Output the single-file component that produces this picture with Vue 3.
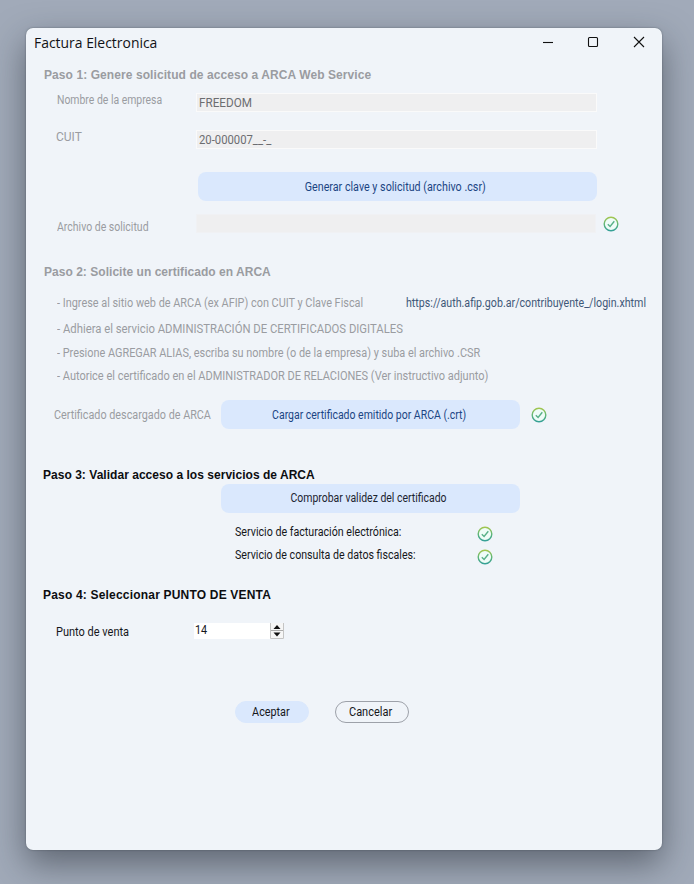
<script setup>
import { h } from 'vue'

const CheckIcon = (props) =>
  h('svg', { class: 'check', viewBox: '0 0 16 16', width: 16, height: 16 }, [
    h('defs', [
      h('linearGradient', { id: props.gid, x1: 0, y1: 0, x2: 0, y2: 1 }, [
        h('stop', { offset: 0, 'stop-color': '#a3c64e' }),
        h('stop', { offset: 0.5, 'stop-color': '#60b678' }),
        h('stop', { offset: 1, 'stop-color': '#35a097' }),
      ]),
    ]),
    h('circle', { cx: 8, cy: 8, r: 6.8, fill: '#effcf8', stroke: `url(#${props.gid})`, 'stroke-width': 1.4 }),
    h('path', { d: 'M4.8 8.2 L7.1 10.5 L11.3 5.3', fill: 'none', stroke: '#58b088', 'stroke-width': 1.4 }),
  ])
CheckIcon.props = ['gid']

const steps = [
  { id: 's2', text: '- Adhiera el servicio ADMINISTRACIÓN DE CERTIFICADOS DIGITALES' },
  { id: 's3', text: '- Presione AGREGAR ALIAS, escriba su nombre (o de la empresa) y suba el archivo .CSR' },
  { id: 's4', text: '- Autorice el certificado en el ADMINISTRADOR DE RELACIONES (Ver instructivo adjunto)' },
]
</script>

<template>
  <main class="desktop">
    <section class="window">
      <header class="titlebar">
        <span class="title t">Factura Electronica</span>
        <svg class="controls" width="104" height="14" viewBox="0 0 104 14" fill="none" stroke="#111" stroke-width="1.1">
          <path d="M1 7.5H11" />
          <rect x="46.5" y="2.5" width="9" height="9" rx="1" />
          <path d="M92 2L102 12M102 2L92 12" />
        </svg>
      </header>

      <h2 class="heading h1 muted">Paso 1: Genere solicitud de acceso a ARCA Web Service</h2>
      <div class="row name-row">
        <label class="muted"><span class="t w1">Nombre de la empresa</span></label>
        <div class="field"><span class="t w2">FREEDOM</span></div>
      </div>
      <div class="row cuit-row">
        <label class="muted">CUIT</label>
        <div class="field"><span class="t w4">20-000007__-_</span></div>
      </div>
      <button class="action wide"><span class="t w5">Generar clave y solicitud (archivo .csr)</span></button>
      <div class="row file-row">
        <label class="muted"><span class="t w6">Archivo de solicitud</span></label>
        <div class="field flat"></div>
        <CheckIcon gid="ring-file" />
      </div>

      <h2 class="heading h2 muted">Paso 2: Solicite un certificado en ARCA</h2>
      <div class="steps muted">
        <p class="first"><span class="t s1">- Ingrese al sitio web de ARCA (ex AFIP) con CUIT y Clave Fiscal</span><a class="t link">https://auth.afip.gob.ar/contribuyente_/login.xhtml</a></p>
        <p v-for="s in steps" :key="s.id"><span class="t" :class="s.id">{{ s.text }}</span></p>
      </div>
      <div class="row cert-row">
        <label class="muted"><span class="t w7">Certificado descargado de ARCA</span></label>
        <button class="action"><span class="t w8">Cargar certificado emitido por ARCA (.crt)</span></button>
        <CheckIcon gid="ring-cert" />
      </div>

      <h2 class="heading h3">Paso 3: Validar acceso a los servicios de ARCA</h2>
      <button class="action dark verify"><span class="t w9">Comprobar validez del certificado</span></button>
      <div class="services">
        <div class="service"><span class="t w10">Servicio de facturación electrónica:</span><CheckIcon gid="ring-billing" /></div>
        <div class="service"><span class="t w11">Servicio de consulta de datos fiscales:</span><CheckIcon gid="ring-fiscal" /></div>
      </div>

      <h2 class="heading h4">Paso 4: Seleccionar PUNTO DE VENTA</h2>
      <div class="row point-row">
        <label><span class="t w12">Punto de venta</span></label>
        <div class="number">
          <span class="value t">14</span>
          <svg width="14" height="16" viewBox="0 0 14 16">
            <path d="M.5 0V15.5H13.5V0" fill="#f6f6f6" stroke="#c4c4c4" />
            <path d="M1 7.5H13" stroke="#aaa" />
            <path d="M3.5 6L7 2L10.5 6ZM3.5 9.5H10.5L7 13.5Z" fill="#111" />
          </svg>
        </div>
      </div>

      <footer class="buttons">
        <button class="pill primary"><span class="t w13">Aceptar</span></button>
        <button class="pill"><span class="t w14">Cancelar</span></button>
      </footer>
    </section>
  </main>
</template>

<style>
body { background: #a1aab9; overflow: hidden; }
</style>

<style scoped>
* { box-sizing: border-box; }
.desktop {
  height: 884px;
  padding: 28px 32px 34px 26px;
  background: #a1aab9;
  font: 12px/16px Roboto, "Liberation Sans", sans-serif;
  color: #15171b;
}
.window {
  height: 822px;
  display: flex;
  flex-direction: column;
  background: #f0f4f9;
  border-radius: 7px;
  box-shadow: 0 0 2px rgba(50, 58, 68, .55), 0 14px 34px rgba(30, 36, 44, .5);
}
.titlebar {
  height: 29px;
  padding: 0 16px 0 8px;
  display: flex;
  align-items: center;
  justify-content: space-between;
}
.controls { margin-top: -2px; }

/* condensed UI lettering */
.t { display: inline-block; transform: scaleX(var(--k, .9)); transform-origin: left center; }
button .t { transform-origin: center; }
.title { --k: .91; font: 15.3px/20px "Open Sans", sans-serif; color: #101216; margin-top: -2px; }
.w1 { --k: .868; }
.w2 { --k: .975; }
.w4 { --k: .94; }
.w5 { --k: .894; }
.w6 { --k: .875; }
.w7 { --k: .9; }
.w8 { --k: .873; }
.w9 { --k: .871; }
.w10 { --k: .89; }
.w11 { --k: .887; }
.w12 { --k: .916; }
.w13 { --k: .9; }
.w14 { --k: .915; }
.s1 { --k: .907; flex: 0 0 349px; }
.s2 { --k: .942; }
.s3 { --k: .908; }
.s4 { --k: .916; }
.link { --k: .888; color: #3f5878; }

.heading { margin: 0; font: bold 12px/16px "Liberation Sans", sans-serif; height: 16px; white-space: nowrap; color: #0c0d10; }
.muted, .heading.muted { color: #9a9ca1; }
p { margin: 0; white-space: nowrap; }
button { border: 0; padding: 0; font: inherit; color: inherit; white-space: nowrap; }
label { white-space: nowrap; flex: none; }
.row { display: flex; flex: none; padding-left: 31px; }
.h1 { margin: 10px 0 0 18px; letter-spacing: .08px; }
.name-row { margin-top: 10px; }
.name-row label, .cuit-row label { width: 139px; margin-top: -1px; }
.cuit-row { margin-top: 18px; padding-left: 30px; }
.cuit-row label { width: 140px; }
.field {
  width: 401px;
  height: 19px;
  padding-left: 2px;
  line-height: 18px;
  background: #efeff0;
  border: 1px solid #fafafa;
  color: #6c6d70;
}
.field.flat { width: 400px; border-color: #f0f1f4; }
.action {
  width: 299px;
  height: 29px;
  flex: none;
  border-radius: 8px;
  background: #dae8fd;
  color: #1b4583;
}
.action.wide { width: 399px; margin: 23px 0 0 171.5px; padding-right: 3px; }
.file-row { margin-top: 13px; }
.file-row label { width: 139px; margin-top: 5px; }
.check { flex: none; }
.file-row .check { margin: 2px 0 0 7px; }
.h2 { margin: 29px 0 0 18px; letter-spacing: .03px; }
.steps { padding: 15px 0 0 31px; }
.steps p { height: 23.5px; }
.steps .first { height: 26px; display: flex; }
.cert-row { margin-top: 8px; padding-left: 28px; }
.cert-row label { width: 167px; margin-top: 7px; }
.cert-row .action { padding: 1px 2px 0 0; }
.cert-row .check { margin: 7px 0 0 11px; }
.h3 { margin: 38px 0 0 17px; letter-spacing: .03px; }
.verify { margin: 1px 0 0 195px; padding-right: 4px; }
.dark { color: #1c2430; }
.services { padding: 11px 0 0 209px; }
.service { height: 23px; width: 258px; display: flex; justify-content: space-between; }
.service .check { margin-top: 2px; }
.h4 { margin: 17px 0 0 17px; letter-spacing: .19px; }
.point-row { margin-top: 20px; padding-left: 30px; }
.point-row label { width: 138px; margin-top: 1px; }
.number { width: 90px; height: 16px; display: flex; justify-content: space-between; background: #fff; padding-left: 1px; }
.value { line-height: 15px; }
.buttons { display: flex; gap: 26px; padding: 61px 0 0 209px; }
.pill { width: 74px; height: 22px; padding: 1px 2px 0 0; border-radius: 11px; border: 1px solid #9da1a9; background: transparent; color: #15171b; }
.primary { background: #dae8fd; border-color: #dae8fd; }
</style>
